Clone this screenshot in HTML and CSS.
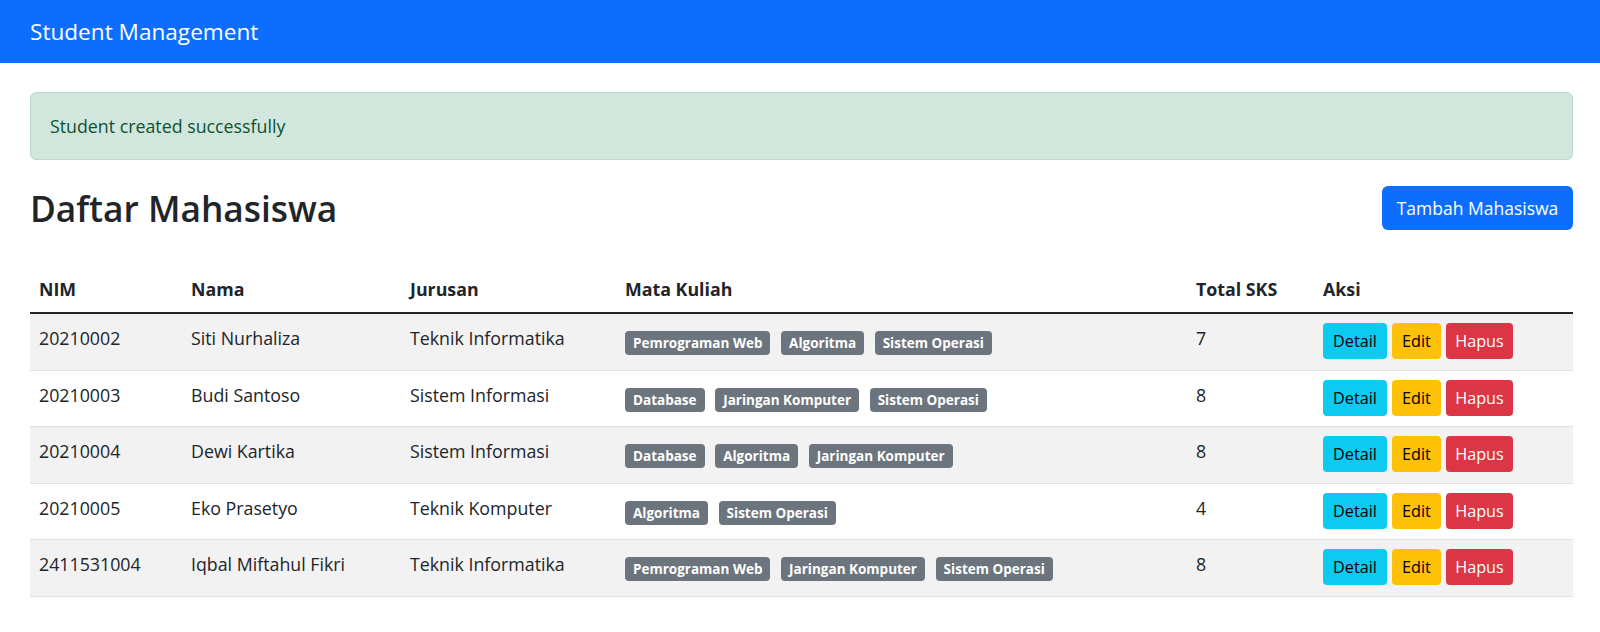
FILE: index.html
```html
<!DOCTYPE html>
<html lang="en">
<head>
    <meta charset="UTF-8">
    <meta name="viewport" content="width=device-width, initial-scale=1.0">
    <title>Student Management</title>
    <link rel="stylesheet" href="styles.css">
</head>
<body>
    <nav class="navbar">
        <span class="brand">Student Management</span>
    </nav>

    <main class="container">
        <div class="alert">Student created successfully</div>

        <div class="page-head">
            <h2>Daftar Mahasiswa</h2>
            <a href="#" class="btn btn-primary">Tambah Mahasiswa</a>
        </div>

        <table class="table">
            <thead>
                <tr>
                    <th class="col-nim">NIM</th>
                    <th class="col-nama">Nama</th>
                    <th class="col-jurusan">Jurusan</th>
                    <th class="col-mk">Mata Kuliah</th>
                    <th class="col-sks">Total SKS</th>
                    <th>Aksi</th>
                </tr>
            </thead>
            <tbody>
                <tr>
                    <td>20210002</td>
                    <td>Siti Nurhaliza</td>
                    <td>Teknik Informatika</td>
                    <td class="badges">
                        <span class="badge">Pemrograman Web</span>
                        <span class="badge">Algoritma</span>
                        <span class="badge">Sistem Operasi</span>
                    </td>
                    <td>7</td>
                    <td class="actions">
                        <div class="action-group">
                            <a href="#" class="btn btn-sm btn-info">Detail</a>
                            <a href="#" class="btn btn-sm btn-warning">Edit</a>
                            <button class="btn btn-sm btn-danger">Hapus</button>
                        </div>
                    </td>
                </tr>
                <tr>
                    <td>20210003</td>
                    <td>Budi Santoso</td>
                    <td>Sistem Informasi</td>
                    <td class="badges">
                        <span class="badge">Database</span>
                        <span class="badge">Jaringan Komputer</span>
                        <span class="badge">Sistem Operasi</span>
                    </td>
                    <td>8</td>
                    <td class="actions">
                        <div class="action-group">
                            <a href="#" class="btn btn-sm btn-info">Detail</a>
                            <a href="#" class="btn btn-sm btn-warning">Edit</a>
                            <button class="btn btn-sm btn-danger">Hapus</button>
                        </div>
                    </td>
                </tr>
                <tr>
                    <td>20210004</td>
                    <td>Dewi Kartika</td>
                    <td>Sistem Informasi</td>
                    <td class="badges">
                        <span class="badge">Database</span>
                        <span class="badge">Algoritma</span>
                        <span class="badge">Jaringan Komputer</span>
                    </td>
                    <td>8</td>
                    <td class="actions">
                        <div class="action-group">
                            <a href="#" class="btn btn-sm btn-info">Detail</a>
                            <a href="#" class="btn btn-sm btn-warning">Edit</a>
                            <button class="btn btn-sm btn-danger">Hapus</button>
                        </div>
                    </td>
                </tr>
                <tr>
                    <td>20210005</td>
                    <td>Eko Prasetyo</td>
                    <td>Teknik Komputer</td>
                    <td class="badges">
                        <span class="badge">Algoritma</span>
                        <span class="badge">Sistem Operasi</span>
                    </td>
                    <td>4</td>
                    <td class="actions">
                        <div class="action-group">
                            <a href="#" class="btn btn-sm btn-info">Detail</a>
                            <a href="#" class="btn btn-sm btn-warning">Edit</a>
                            <button class="btn btn-sm btn-danger">Hapus</button>
                        </div>
                    </td>
                </tr>
                <tr>
                    <td>2411531004</td>
                    <td>Iqbal Miftahul Fikri</td>
                    <td>Teknik Informatika</td>
                    <td class="badges">
                        <span class="badge">Pemrograman Web</span>
                        <span class="badge">Jaringan Komputer</span>
                        <span class="badge">Sistem Operasi</span>
                    </td>
                    <td>8</td>
                    <td class="actions">
                        <div class="action-group">
                            <a href="#" class="btn btn-sm btn-info">Detail</a>
                            <a href="#" class="btn btn-sm btn-warning">Edit</a>
                            <button class="btn btn-sm btn-danger">Hapus</button>
                        </div>
                    </td>
                </tr>
            </tbody>
        </table>
    </main>
</body>
</html>
```

FILE: styles.css
```css
body {
    margin: 0;
    font-family: 'Open Sans', 'Noto Sans', sans-serif;
    font-size: 17.8px;
    line-height: 26px;
    color: #212529;
    background: #fff;
}

/* Navbar */
.navbar {
    background: #0d6efd;
    height: 63px;
    display: flex;
    align-items: center;
    padding: 0 30px;
}

.brand {
    color: #fff;
    font-size: 22.6px;
    line-height: 30px;
}

/* Page */
.container {
    padding: 0 27px 0 30px;
}

.alert {
    margin-top: 29px;
    padding: 20px 19px;
    background: #d1e7dd;
    border: 1px solid #badbcc;
    border-radius: 6px;
    color: #0f5132;
}

.page-head {
    display: flex;
    justify-content: space-between;
    align-items: center;
    margin-top: 26px;
}

.page-head h2 {
    margin: 0;
    font-size: 35.3px;
    font-weight: 600;
    line-height: 40px;
}

/* Buttons */
.btn {
    display: inline-flex;
    align-items: center;
    justify-content: center;
    box-sizing: border-box;
    border: 1px solid transparent;
    border-radius: 6px;
    text-decoration: none;
    font-family: inherit;
    cursor: pointer;
}

.btn-primary {
    height: 44px;
    padding: 0 12px;
    width: 191px;
    background: #0d6efd;
    color: #fff;
    font-size: 17.5px;
}

.btn-sm {
    height: 36px;
    padding: 0 6px;
    font-size: 16.2px;
    border-radius: 4px;
}

.btn-info {
    background: #0dcaf0;
    color: #000;
    width: 64px;
}

.btn-warning {
    background: #ffc107;
    color: #000;
    width: 49px;
}

.btn-danger {
    background: #dc3545;
    color: #fff;
    width: 67px;
}

/* Table */
.table {
    width: 100%;
    margin-top: 37px;
    border-collapse: collapse;
}

.table th {
    text-align: left;
    font-weight: 700;
    padding: 9px 9px 10px;
    border-bottom: 2px solid #212529;
}

.table td {
    padding: 11px 9px 9px;
    vertical-align: top;
    border-bottom: 1px solid #dee2e6;
}

.table tbody tr:nth-child(odd) {
    background: #f2f2f2;
}

.col-nim { width: 134px; }
.col-nama { width: 201px; }
.col-jurusan { width: 197px; }
.col-mk { width: 553px; }
.col-sks { width: 109px; }

.table td.badges {
    padding-top: 14px;
}

.badge {
    display: inline-block;
    background: #6c757d;
    color: #fff;
    font-size: 13.5px;
    font-weight: 700;
    line-height: 24px;
    padding: 0 8px;
    border-radius: 4px;
    margin-right: 6px;
}

.table td.actions {
    padding: 9px 9px 10.5px;
}

.action-group {
    display: flex;
    gap: 5px;
}
```
